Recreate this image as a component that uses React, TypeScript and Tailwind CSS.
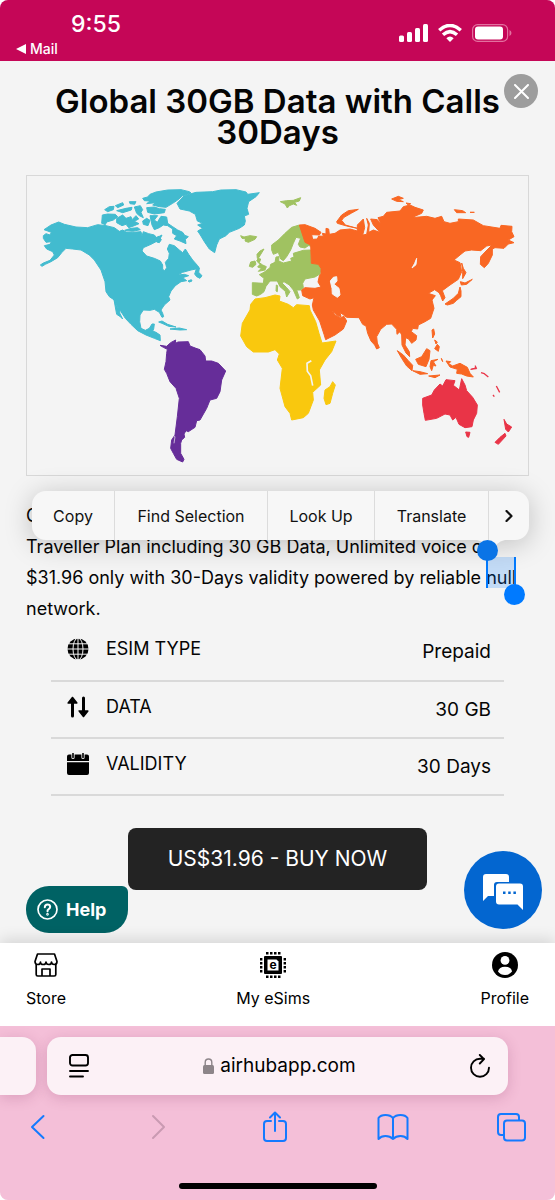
import type { ReactNode } from 'react';

const specs = [
  { label: 'ESIM TYPE', value: 'Prepaid', icon: <GlobeIcon /> },
  { label: 'DATA', value: '30 GB', icon: <ArrowsIcon /> },
  { label: 'VALIDITY', value: '30 Days', icon: <CalendarIcon /> },
];

function GlobeIcon() {
  return (
    <svg className="h-[22px] w-[22px]" viewBox="0 0 22 22" fill="none">
      <circle cx="11" cy="11" r="10.5" fill="#000" />
      <g stroke="#f4f4f4" strokeWidth="1">
        <path d="M0 11h22M2 5.8h18M2 16.2h18M11 0v22" />
        <ellipse cx="11" cy="11" rx="5" ry="11" />
      </g>
    </svg>
  );
}

function ArrowsIcon() {
  return (
    <svg className="h-[22px] w-[22px]" viewBox="0 0 22 22" fill="none" stroke="#000" strokeLinecap="round" strokeLinejoin="round">
      <path d="M5.5 5v15M16.5 2v15" strokeWidth="3" />
      <path d="M5.5 1.5L1.2 7h8.6zM16.5 20.5L12.2 15h8.6z" fill="#000" strokeWidth="1.6" />
    </svg>
  );
}

function CalendarIcon() {
  return (
    <svg className="h-[22px] w-[22px]" viewBox="0 0 22 22" fill="none">
      <path d="M0 3.5Q0 1.5 2 1.5h18q2 0 2 2V8H0zM0 9.2h22V20q0 2-2 2H2q-2 0-2-2z" fill="#000" />
      <path d="M6 0.5v4M16 0.5v4" stroke="#f4f4f4" strokeWidth="3.2" strokeLinecap="round" />
      <path d="M6 0.5v4M16 0.5v4" stroke="#000" strokeWidth="1.6" strokeLinecap="round" />
    </svg>
  );
}

function WorldMap() {
  return (
    <svg className="block w-full" viewBox="3 3 1503 897" strokeLinejoin="round" strokeWidth="3" role="img" aria-label="World map">
      {/* North America */}
      <g fill="#42bbcf" stroke="#42bbcf">
        <path d="M54 164L75 150L98 141L115 148L150 156L185 158L215 149L240 152L265 158L280 169L290 165L300 171L320 172L345 170L348 183L352 170L368 176L385 180L392 188L408 180L402 192L388 193L390 200L375 208L352 218L348 228L362 243L385 250L403 258L410 270L410 283L416 287L422 278L418 262L428 250L430 235L424 222L430 208L445 212L460 225L470 233L478 222L488 238L500 255L515 272L520 280L495 285L470 292L455 300L475 298L488 302L470 308L482 317L465 320L448 332L435 348L428 365L432 375L415 390L405 405L410 415L413 425L408 427L400 412L385 403L372 406L352 405L342 420L341 440L345 460L358 466L370 460L378 447L385 447L383 462L380 468L390 472L402 480L403 497L385 490L360 480L335 467L315 448L298 430L285 410L275 395L265 375L250 365L240 350L237 320L225 285L205 255L190 240L165 225L140 222L120 220L108 232L95 248L75 260L58 268L48 274L43 270L52 264L72 256L85 240L80 230L62 222L55 212L72 208L76 200L60 202L52 190L52 182L60 176L72 180L76 172Z" />
        <path d="M350 70L365 66L372 58L390 51L425 45L465 44L490 50L495 54L470 62L455 75L440 85L420 97L400 95L380 90L388 83L362 86L372 78L355 77ZM362 98L385 96L400 101L418 103L415 113L385 117L365 112Z" />
        <path d="M229 120L245 117L268 118L275 125L262 135L242 141L238 149L227 145ZM272 130L290 120L300 130L315 125L318 134L330 122L338 132L325 139L339 146L325 152L308 158L300 148L288 152L272 143ZM236 104L250 95L264 94L262 104L245 110ZM268 92L290 83L293 90L275 98ZM310 80L330 80L326 88L312 86ZM272 107L300 100L318 97L316 105L290 113ZM325 96L343 92L350 104L345 112L352 128L340 122L332 115ZM350 138L362 130L372 136L366 152L352 148ZM296 166L315 160L335 158L343 164L320 169Z" />
        <path d="M372 122L395 122L385 135L394 142L405 124L422 126L425 145L440 155L455 165L470 172L476 181L487 185L478 193L480 206L462 198L445 192L452 182L440 175L440 162L425 152L412 150L400 158L385 164L378 150ZM388 190L398 184L406 194L400 203L392 201Z" />
        <path d="M514 273L520 280L518 292L528 302L522 310L512 305L506 297ZM486 318L496 314L498 318L490 321ZM264 374L272 392L280 404L282 416L290 432L283 425L272 418L269 402ZM398 441L408 438L425 448L450 456L428 454L408 445ZM432 462L460 459L482 464L462 465Z" />
        <path d="M453 85L475 62L510 52L560 50L585 45L630 44L660 51L665 58L700 53L690 65L668 80L663 100L668 118L655 123L658 138L655 150L640 160L610 172L600 182L580 192L572 210L566 233L550 222L535 200L523 180L515 168L530 160L515 150L530 145L514 138L508 118L490 108L462 102Z" />
      </g>
      {/* South America */}
      <g transform="translate(342 405)" fill="#662d99" stroke="#662d99">
        <path d="M60 106L80 109L92 98L107 90L106 100L114 96L145 95L150 108L168 115L180 119L195 138L197 153L215 153L235 160L257 183L245 210L240 245L230 265L210 270L200 295L180 330L170 332L165 352L145 365L138 362L132 372L134 382L125 390L122 400L122 430L132 448L128 456L110 448L100 430L92 415L95 390L105 375L112 320L118 265L108 235L90 215L80 190L73 178L78 155L80 130L82 118L70 112Z" />
        <path d="M100 376l5 4l-3 20" fill="none" stroke="#f4f4f4" strokeWidth="2" />
      </g>
      {/* Europe, Asia and Africa */}
      <g transform="translate(642 0)">
        <g fill="#a0c261" stroke="#a0c261">
          <path d="M2 182L12 186L30 182L50 185L45 193L25 202L15 198L17 192L6 190ZM121 80L140 77L160 76L182 68L178 78L164 82L170 91L160 87L148 92L142 99L135 87ZM72 222L60 228L51 238L52 250L62 252L58 263L68 270L79 275L75 285L55 289L64 280L53 276L60 268L50 258ZM32 261L45 258L48 268L38 277L28 274Z" />
          <path d="M95 210L115 195L135 175L155 157L178 150L182 160L190 180L195 202L215 206L222 215L205 212L195 219L180 216L175 208L182 190L168 187L160 205L152 225L140 245L130 257L122 252L115 232L100 238L95 225Z" />
          <path d="M37 323L70 325L72 310L58 299L72 292L90 278L92 268L105 262L108 246L117 245L116 258L130 264L155 258L152 250L162 246L160 235L190 226L212 225L214 265L235 268L243 280L240 297L225 306L195 312L188 325L190 338L182 345L170 345L178 368L172 372L160 345L148 330L132 320L126 324L140 338L150 350L140 366L136 349L120 335L112 318L90 318L78 334L72 350L62 358L50 363L37 358ZM109 330L113 332L112 350L108 348Z" />
        </g>
        <g fill="#f96723" stroke="#f96723">
          <path d="M178 150L195 149L225 160L243 172L238 180L215 179L218 193L232 192L236 183L250 184L247 175L258 177L258 160L266 162L268 178L285 175L300 165L330 162L352 168L352 150L370 132L374 158L368 180L380 178L385 150L380 130L388 145L386 172L400 165L420 172L400 150L392 132L412 134L424 148L414 128L430 124L440 112L480 108L490 95L510 90L525 97L550 105L545 115L515 128L560 124L585 130L605 124L612 140L630 145L655 140L655 132L700 135L730 152L780 160L783 151L816 154L815 170L822 185L805 195L822 203L805 207L792 220L765 218L757 222L757 240L745 265L733 278L721 268L722 245L738 228L756 210L740 213L722 227L695 225L675 228L660 240L642 255L660 263L665 290L655 313L630 330L607 347L615 368L608 378L602 362L597 353L584 344L565 355L586 362L576 375L582 400L572 430L555 440L535 450L533 462L518 460L514 470L530 482L528 495L515 505L506 492L497 488L495 510L508 530L509 545L498 534L486 510L485 480L480 470L471 478L470 463L455 447L440 448L422 463L410 485L412 504L418 518L410 522L404 510L393 498L383 475L378 453L368 448L357 428L320 427L300 412L303 425L290 420L275 404L285 420L302 428L312 424L320 438L310 462L285 480L257 494L252 478L239 438L220 405L217 390L222 368L210 372L188 362L185 345L195 338L225 340L243 336L234 321L238 303L243 295L243 280L235 268L214 265L212 210L195 202Z" />
          <path d="M290 140L305 120L325 107L355 103L335 114L312 127L305 136L316 150L352 160L320 153L292 145ZM455 72L475 64L490 70L475 74L490 80L470 79ZM498 84L512 86L505 90ZM643 104L668 107L677 113L650 113ZM690 112L703 112ZM665 264L670 280L678 293L668 311L668 290ZM615 387L640 370L655 355L660 336L663 348L663 365L650 376L640 385L622 390ZM661 320L675 324L697 313L680 328L664 330Z" />
          <path d="M280 307l10-2l1 13l-9 10l15 12l3 20l-8 7l-15-10l-1-17l-5-22zM516 279l12-10l2-19l-6 15z" fill="#f4f4f4" stroke="#f4f4f4" />
        </g>
        <g fill="#f9c80e" stroke="#f9c80e">
          <path d="M45 372L75 368L105 360L120 363L118 378L145 388L160 398L170 389L208 392L210 405L227 440L237 475L246 504L288 498L275 530L255 555L238 585L242 630L218 652L220 675L205 715L190 728L155 735L150 715L135 695L120 640L127 580L112 555L118 537L105 524L85 531L40 531L20 515L2 483L7 445L30 405L32 388Z" />
          <path d="M555 240L570 230L578 215L586 225L578 250L570 280L558 284L552 265Z" transform="translate(-300 405)" />
          <path d="M214 557l-13 8l1 24l10 13l6 30" fill="none" stroke="#f4f4f4" strokeWidth="5" />
        </g>
      </g>
      {/* South-east Asia and Oceania */}
      <g transform="translate(972 405)">
        <path fill="#f96723" stroke="#f96723" d="M142 122L160 135L175 152L188 166L186 182L170 168L155 145ZM188 182L210 185L233 191L210 193ZM197 148L215 140L230 116L240 122L237 148L228 170L205 163ZM243 152L264 148L250 155L258 168L250 166L245 182L240 170ZM236 198L270 195L255 203ZM274 145L278 155ZM288 153L302 155L296 161L308 168L330 160L352 172L360 190L370 201L350 198L335 192L320 190L322 178L300 171ZM246 60L251 57L254 72L248 84ZM254 90L262 96L258 102ZM262 103L268 110L265 124L254 116Z" />
        <g fill="#e93447" stroke="#e93447">
          <path d="M218 265L245 255L253 240L270 222L278 228L288 209L315 212L310 226L328 240L335 206L345 225L350 242L368 262L382 285L380 310L370 330L366 350L345 353L327 343L318 322L308 330L300 315L285 312L260 325L226 331L222 310L218 285ZM347 366L360 367L356 382L351 380ZM462 328L470 342L485 351L475 366L467 358ZM465 370L468 378L445 403L435 397L450 382ZM362 178L376 174L376 167L380 176Z" />
          <path d="M393 188l10 3l12 10M439 228l10 19M429 255l4 5" fill="none" strokeWidth="4" />
        </g>
      </g>
    </svg>
  );
}

function StatusBar() {
  return (
    <header className="flex items-start justify-between bg-[#c50657] pt-2 pr-[43px] pb-1 pl-4 text-white">
      <div>
        <div className="pl-[55px] text-[23px] leading-8 font-medium">9:55</div>
        <a href="#mail" className="flex items-center gap-1 text-[14px] leading-[17px] font-medium">
          <svg className="h-[10px] w-[10px]" viewBox="0 0 10 10" fill="currentColor"><path d="M0 5L10 0v10z" /></svg>
          Mail
        </a>
      </div>
      <div className="flex items-center gap-[10px] pt-4">
        <svg className="h-[18px] w-[29px]" viewBox="0 0 29 18" fill="currentColor">
          <rect x="0" y="11.5" width="5" height="6.5" rx="1.5" />
          <rect x="8" y="8" width="5" height="10" rx="1.5" />
          <rect x="16" y="4" width="5" height="14" rx="1.5" />
          <rect x="24" y="0" width="5" height="18" rx="1.5" />
        </svg>
        <svg className="h-[18px] w-[24px]" viewBox="0 0 24 18" fill="none" stroke="currentColor" strokeWidth="3.4">
          <path d="M1.2 6.2Q12 -3.4 22.8 6.2M5 10.8Q12 4.5 19 10.8" />
          <path d="M8.3 14.2q3.7-3.2 7.4 0L12 18z" fill="currentColor" stroke="none" />
        </svg>
        <svg className="h-[18px] w-[40px]" viewBox="0 0 40 18" fill="none">
          <rect x="0.6" y="0.6" width="35" height="16.8" rx="5" stroke="#e3709f" strokeWidth="1.2" />
          <rect x="3" y="2.5" width="28" height="13" rx="3" fill="#fff" />
          <path d="M37.5 6v6q2-1 2-3t-2-3z" fill="#e3709f" />
        </svg>
      </div>
    </header>
  );
}

function SelectionMenu() {
  return (
    <div className="absolute -top-[9px] right-0 left-[6px] z-10 flex h-[49px] rounded-[14px] bg-[#f7f7f7] text-[16px] text-[#111] shadow-[0_4px_28px_rgba(0,0,0,0.22)]">
      <button className="w-[83px] border-r border-[#dcdcdc]">Copy</button>
      <button className="grow border-r border-[#dcdcdc]">Find Selection</button>
      <button className="w-[107px] border-r border-[#dcdcdc]">Look Up</button>
      <button className="w-[114px] border-r border-[#dcdcdc]">Translate</button>
      <button className="flex w-10 items-center justify-center" aria-label="More">
        <svg className="h-3 w-2" viewBox="0 0 8 12" fill="none" stroke="currentColor" strokeWidth="2.2" strokeLinecap="round" strokeLinejoin="round"><path d="M1.5 1L6.5 6l-5 5" /></svg>
      </button>
      <svg className="absolute top-full right-[24px] h-[9px] w-[28px]" viewBox="0 0 28 9" fill="#f7f7f7"><path d="M0 0h28q-5 1-8 4l-4 4q-2 2-4 0L8 4Q5 1 0 0z" /></svg>
    </div>
  );
}

function TabLink({ label, children }: { label: string; children: ReactNode }) {
  return (
    <a href={`#${label}`} className="flex flex-col items-center gap-2 text-[16px] leading-6">
      {children}
      {label}
    </a>
  );
}

function TabBar() {
  return (
    <nav className="relative flex justify-between bg-white px-[26px] pt-[9px] pb-4 text-black shadow-[0_-4px_14px_rgba(0,0,0,0.12)]">
      <TabLink label="Store">
        <svg className="h-[26px] w-6" viewBox="0 0 24 26" fill="none" stroke="currentColor" strokeWidth="1.7" strokeLinejoin="round">
          <path d="M3.5 2h17L23 9.5q0 3-2.7 3T17.5 10q0 2.5-2.7 2.5T12 10q0 2.5-2.8 2.5T6.5 10q0 2.5-2.7 2.5T1 9.5z" />
          <path d="M2.2 12v10.5Q2.2 24 3.7 24h16.6q1.5 0 1.5-1.5V12M8 24v-7h8v7" />
        </svg>
      </TabLink>
      <TabLink label="My eSims">
        <svg className="h-[26px] w-[26px]" viewBox="0 0 26 26" fill="none">
          <path d="M6 1.2h14.5M6 24.8h14.5M1.2 6v14.5M24.8 6v14.5" stroke="#000" strokeWidth="2.4" strokeDasharray="2.5 1.5" />
          <rect x="4" y="4" width="18" height="18" rx="1" fill="#000" />
          <path d="M7.5 7.5h9l2 2v9h-11z" fill="#fff" />
          <text x="13" y="17" textAnchor="middle" fontSize="12" fontWeight="700" fill="#000">e</text>
        </svg>
      </TabLink>
      <TabLink label="Profile">
        <svg className="h-[26px] w-[26px]" viewBox="0 0 26 26">
          <circle cx="13" cy="13" r="13" fill="#000" />
          <circle cx="13" cy="8.4" r="4.4" fill="#fff" />
          <path d="M6 19.5q1-4.8 7-4.8t7 4.8q-2.6 3.5-7 3.5t-7-3.5z" fill="#fff" />
        </svg>
      </TabLink>
    </nav>
  );
}

function ToolButton({ label, children }: { label: string; children: ReactNode }) {
  return (
    <button aria-label={label} className="flex h-8 w-8 items-center justify-center text-[#147aff] disabled:text-[#c99ab2]" disabled={label === 'Forward'}>
      <svg className="h-8 w-8" viewBox="0 0 32 32" fill="none" stroke="currentColor" strokeWidth="2" strokeLinecap="round" strokeLinejoin="round">
        {children}
      </svg>
    </button>
  );
}

function BrowserBar() {
  return (
    <footer className="relative overflow-hidden bg-[#f4bfd8] pt-[11px] pb-[11px]">
      <div className="flex gap-[11px] pr-[47px]">
        <div className="h-[58px] w-9 rounded-r-[14px] bg-[#fcf1f6] shadow-[0_3px_14px_rgba(120,30,80,0.2)]" />
        <div className="flex h-[58px] grow items-center justify-between rounded-[14px] bg-[#fcf1f6] pr-[18px] pl-[22px] text-black shadow-[0_3px_14px_rgba(120,30,80,0.2)]">
          <button aria-label="Page settings">
            <svg className="h-6 w-5" viewBox="0 0 20 24" fill="none" stroke="currentColor" strokeWidth="1.9" strokeLinecap="round">
              <rect x="1" y="1" width="18" height="10.5" rx="2.5" />
              <path d="M1 17h18M1 22.5h13" />
            </svg>
          </button>
          <button className="flex items-center gap-[6px] text-[19px]">
            <svg className="h-4 w-[11px]" viewBox="0 0 11 16" fill="#8d8589">
              <rect y="7" width="11" height="9" rx="1.5" />
              <path d="M2.2 8V4.5q0-3.5 3.3-3.5t3.3 3.5V8" fill="none" stroke="#8d8589" strokeWidth="1.4" />
            </svg>
            airhubapp.com
          </button>
          <button aria-label="Reload">
            <svg className="h-6 w-5" viewBox="0 0 20 24" fill="none" stroke="currentColor" strokeWidth="1.9" strokeLinecap="round" strokeLinejoin="round">
              <path d="M19 13.8a9 9 0 1 1-9-9h4M9.8 1L14 5.2L9.8 9.5" />
            </svg>
          </button>
        </div>
      </div>
      <div className="mt-4 flex justify-between pr-7 pl-[22px]">
        <ToolButton label="Back"><path d="M21.5 5L10 16l11.5 11" /></ToolButton>
        <ToolButton label="Forward"><path d="M13 5L24 16L13 27" /></ToolButton>
        <ToolButton label="Share">
          <path d="M12 10H8q-3 0-3 3v14q0 3 3 3h16q3 0 3-3V13q0-3-3-3h-4M16 20V2M11 6.5L16 1.5L21 6.5" />
        </ToolButton>
        <ToolButton label="Bookmarks">
          <path d="M16 7q-2.5-3-7.500-3T1.500 7v21q2.500-3 7-3t7.500 3q3-3 7.500-3t7 3V7q-2-3-7-3T16 7zM16 7v21" />
        </ToolButton>
        <ToolButton label="Tabs">
          <path d="M8.500 24H6q-3 0-3-3V6q0-3 3-3h15q3 0 3 3v3" />
          <rect x="9" y="9.500" width="21" height="20" rx="3" />
        </ToolButton>
      </div>
      <div className="mx-auto mt-10 h-[6px] w-[198px] rounded-full bg-black" />
    </footer>
  );
}

export default function App() {
  return (
    <div className="overflow-hidden rounded-lg bg-[#f4f4f4] font-['Inter',sans-serif] text-[#050505]">
      <StatusBar />
      <main className="relative px-[26px] pt-[25px] pb-[53px]">
        <h1 className="text-center text-[33px] leading-[31px] font-semibold whitespace-nowrap">
          Global 30GB Data with Calls
          <br />
          30Days
        </h1>
        <button aria-label="Close" className="absolute top-[13px] right-[17px] flex h-[34px] w-[34px] items-center justify-center rounded-full bg-[#9d9d9d] text-white">
          <svg className="h-[15px] w-[15px]" viewBox="0 0 15 15" fill="none" stroke="currentColor" strokeWidth="2" strokeLinecap="round"><path d="M1 1l13 13M14 1L1 14" /></svg>
        </button>

        <div className="mt-[27px] border border-[#d8d8d8]">
          <WorldMap />
        </div>

        <div className="relative mt-6">
          <p className="text-[18px] leading-[31px] whitespace-nowrap">
            G
            <br />
            Traveller Plan including 30 GB Data, Unlimited voice of
            <br />
            $31.96 only with 30-Days validity powered by reliable{' '}
            <span className="relative inline-block">
              null
              <span className="absolute inset-x-0 -top-[5px] h-[31px] border-x-2 border-[#007aff] bg-[#007aff]/20">
                <span className="absolute -top-[17px] -left-[11px] z-20 h-[21px] w-[21px] rounded-full bg-[#0a74e6]" />
                <span className="absolute -right-[11px] -bottom-[17px] z-20 h-[21px] w-[21px] rounded-full bg-[#007aff]" />
              </span>
            </span>
            <br />
            network.
          </p>
          <SelectionMenu />
        </div>

        <table className="mx-auto w-[453px] max-w-full border-collapse text-[18px] leading-6">
          <tbody>
            {specs.map((s) => (
              <tr key={s.label} className="h-[57px] border-b-2 border-[#d9d9d9]">
                <th scope="row" className="pl-4 text-left font-normal">
                  <span className="flex items-center gap-[17px] pb-[6px]">
                    {s.icon}
                    {s.label}
                  </span>
                </th>
                <td className="pr-[13px] text-right text-[19px]">{s.value}</td>
              </tr>
            ))}
          </tbody>
        </table>

        <button className="mx-auto mt-8 block h-[62px] w-[299px] rounded-lg bg-[#232323] text-[21px] text-white">
          US$31.96 - BUY NOW
        </button>

        <button className="absolute bottom-[10px] left-[26px] flex h-[47px] w-[102px] items-center gap-2 rounded-[23px] rounded-tr-[6px] bg-[#006264] pl-[11px] text-[18px] font-bold text-white">
          <svg className="h-[21px] w-[21px]" viewBox="0 0 21 21" fill="none" stroke="currentColor" strokeWidth="1.7" strokeLinecap="round">
            <circle cx="10.5" cy="10.5" r="9.5" />
            <path d="M7.8 8.2q.2-2.700 2.700-2.700t2.700 2.300q0 1.500-1.500 2.400t-1.200 2.200" strokeWidth="2" />
            <circle cx="10.5" cy="15.3" r=".5" />
          </svg>
          Help
        </button>
        <button aria-label="Chat" className="absolute right-[13px] bottom-[14px] flex h-[78px] w-[78px] items-center justify-center rounded-full bg-[#0366d0]">
          <svg className="mt-1 h-9 w-10" viewBox="0 0 40 36" fill="#fff">
            <path d="M3 0h20q3 0 3 3v5H14q-3 0-3 3v11H5l-5 5V3q0-3 3-3z" />
            <path d="M16 9.5h21q3 0 3 3V36l-5.500-5.500H16q-3 0-3-3v-15q0-3 3-3z" />
            <path d="M20 20h2.500v-2.500H20zM25.200 20h2.500v-2.500h-2.500zM30.400 20h2.500v-2.500h-2.500z" fill="#0366d0" />
          </svg>
        </button>
      </main>
      <TabBar />
      <BrowserBar />
    </div>
  );
}
